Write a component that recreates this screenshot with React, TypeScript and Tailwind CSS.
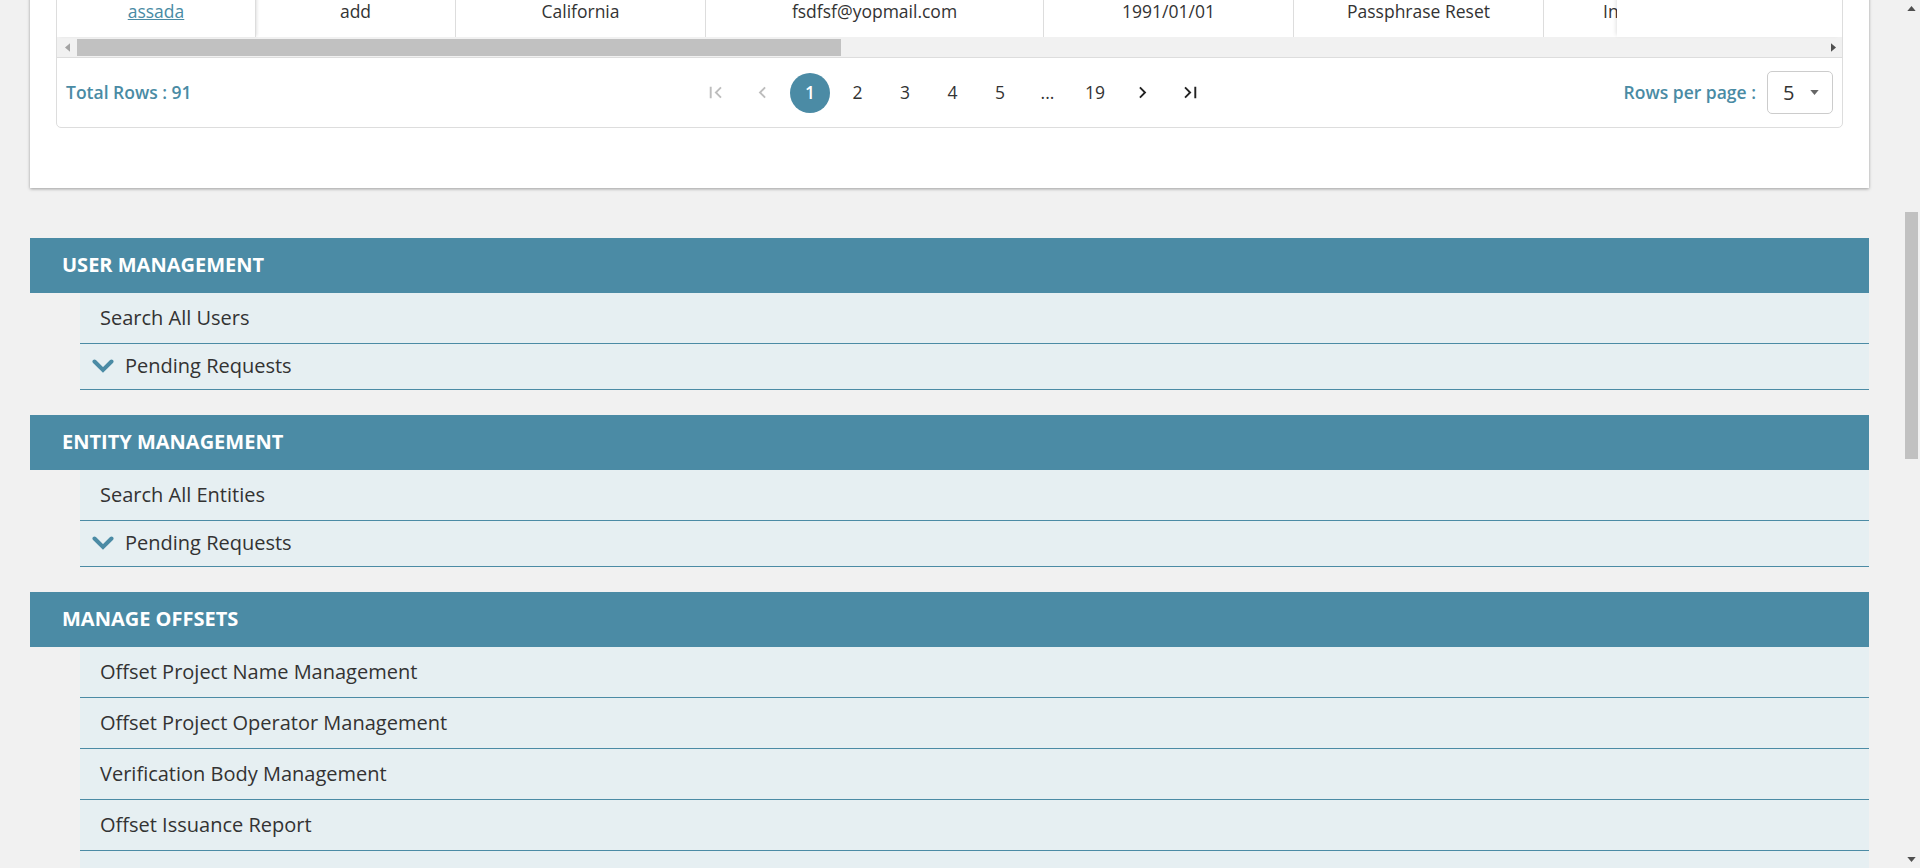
import { MdFirstPage, MdChevronLeft, MdChevronRight, MdLastPage } from 'react-icons/md';

const cells = [
  { text: 'assada', w: 'w-[199px]', link: true },
  { text: 'add', w: 'w-[200px]' },
  { text: 'California', w: 'w-[250px]' },
  { text: 'fsdfsf@yopmail.com', w: 'w-[338px]' },
  { text: '1991/01/01', w: 'w-[250px]' },
  { text: 'Passphrase Reset', w: 'w-[250px]' },
];

const sections = [
  { title: 'User Management', items: ['Search All Users'], pending: true },
  { title: 'Entity Management', items: ['Search All Entities'], pending: true },
  {
    title: 'Manage Offsets',
    items: [
      'Offset Project Name Management',
      'Offset Project Operator Management',
      'Verification Body Management',
      'Offset Issuance Report',
      'Offset Tracking Report',
    ],
    pending: false,
  },
];

function Triangle({ dir, color }: { dir: 'up' | 'down' | 'left' | 'right'; color: string }) {
  const pts = {
    up: '0,6 5,0 10,6',
    down: '0,0 10,0 5,6',
    left: '6,0 6,10 0,5',
    right: '0,0 6,5 0,10',
  }[dir];
  const vertical = dir === 'up' || dir === 'down';
  return (
    <svg width={vertical ? 9 : 5} height={vertical ? 5 : 9} viewBox={vertical ? '0 0 10 6' : '0 0 6 10'}>
      <polygon points={pts} fill={color} />
    </svg>
  );
}

function TablePanel() {
  return (
    <div className="bg-white px-[26px] pb-[60px] shadow-[0_1px_3px_rgba(0,0,0,0.35)]">
      <div className="rounded-b-[5px] border border-[#ddd] overflow-hidden">
        {/* last visible data row */}
        <div className="flex h-[52px] text-[17.5px] text-[#333]">
          {cells.map((c, i) => (
            <div
              key={c.text}
              className={`${c.w} shrink-0 flex items-center justify-center border-r border-[#ddd] ${
                i === 0 ? 'shadow-[2px_0_3px_-1px_rgba(0,0,0,0.12)]' : ''
              }`}
            >
              {c.link ? <span className="text-[#4a8ba4] underline">{c.text}</span> : c.text}
            </div>
          ))}
          <div className="flex-1 overflow-hidden flex items-center pl-[59px] whitespace-nowrap">Inactive</div>
          <div className="w-[225px] shrink-0 bg-white shadow-[-3px_0_4px_-2px_rgba(0,0,0,0.12)]" />
        </div>

        {/* horizontal scroll bar */}
        <div className="flex h-[21px] items-center bg-[#f1f1f1] border-b border-[#ddd]">
          <div className="w-[20px] flex justify-center">
            <Triangle dir="left" color="#a3a3a3" />
          </div>
          <div className="w-[764px] h-[17px] bg-[#c1c1c1]" />
          <div className="flex-1" />
          <div className="w-[17px] flex justify-center">
            <Triangle dir="right" color="#505050" />
          </div>
        </div>

        {/* footer */}
        <div className="grid grid-cols-[1fr_auto_1fr] items-center h-[69px] px-[9px]">
          <div className="text-[17.5px] font-semibold text-[#4a8ba4]">Total Rows : 91</div>
          <div className="flex items-center gap-[7.5px] ml-[6px] text-[17.5px] text-[#333]">
            <span className="w-10 h-10 flex items-center justify-center text-[#bdbdbd]">
              <MdFirstPage size={23} />
            </span>
            <span className="w-10 h-10 flex items-center justify-center text-[#bdbdbd]">
              <MdChevronLeft size={23} />
            </span>
            <span className="w-10 h-10 rounded-full bg-[#4b8ba5] text-white font-semibold flex items-center justify-center">
              1
            </span>
            {['2', '3', '4', '5', '...', '19'].map((p) => (
              <span key={p} className="w-10 h-10 flex items-center justify-center">
                {p}
              </span>
            ))}
            <span className="w-10 h-10 flex items-center justify-center text-[#222]">
              <MdChevronRight size={23} />
            </span>
            <span className="w-10 h-10 flex items-center justify-center text-[#222]">
              <MdLastPage size={23} />
            </span>
          </div>
          <div className="flex items-center justify-end gap-[11px]">
            <span className="text-[17.5px] font-semibold text-[#4a8ba4]">Rows per page :</span>
            <div className="w-[66px] h-[43px] border border-[#ccc] rounded-[5px] flex items-center justify-between pl-[15px] pr-[13px]">
              <span className="text-[20px] text-[#333]">5</span>
              <Triangle dir="down" color="#666" />
            </div>
          </div>
        </div>
      </div>
    </div>
  );
}

function MenuSection({ title, items, pending, first }: { title: string; items: string[]; pending: boolean; first: boolean }) {
  return (
    <section className={first ? 'mt-[50px]' : 'mt-[25.5px]'}>
      <div className="h-[54.5px] bg-[#4b8ba5] flex items-center pl-[32px] text-[20px] font-bold uppercase text-white">
        {title}
      </div>
      <div className="ml-[50px] text-[20px] text-[#333]">
        {items.map((it) => (
          <div key={it} className="h-[51px] flex items-center pl-[20px] bg-[#e6eff2] border-b border-[#4b8ba5]">
            {it}
          </div>
        ))}
        {pending && (
          <div className="h-[46px] flex items-center pl-[12px] gap-[11px] bg-[#e6eff2] border-b border-[#4b8ba5]">
            <svg width="22" height="14" viewBox="0 0 22 14" fill="none">
              <path d="M2.5 2.5 L11 11 L19.5 2.5" stroke="#4b8ba5" strokeWidth="4" strokeLinecap="round" strokeLinejoin="miter" />
            </svg>
            <span>Pending Requests</span>
          </div>
        )}
      </div>
    </section>
  );
}

export default function App() {
  return (
    <div className="flex h-screen w-full overflow-hidden bg-[#f1f1f1] font-['Open_Sans',sans-serif]">
      <main className="flex-1 overflow-hidden pl-[30px] pr-[34px]">
        <div className="-mt-[16px]">
          <TablePanel />
          {sections.map((s, i) => (
            <MenuSection key={s.title} {...s} first={i === 0} />
          ))}
        </div>
      </main>

      {/* page scroll bar */}
      <div className="w-[17px] flex flex-col bg-[#f1f1f1]">
        <div className="h-[17px] flex items-center justify-center">
          <Triangle dir="up" color="#505050" />
        </div>
        <div className="flex-1 px-[2px]">
          <div className="mt-[195px] h-[247px] bg-[#c1c1c1]" />
        </div>
        <div className="h-[17px] flex items-center justify-center">
          <Triangle dir="down" color="#505050" />
        </div>
      </div>
    </div>
  );
}
